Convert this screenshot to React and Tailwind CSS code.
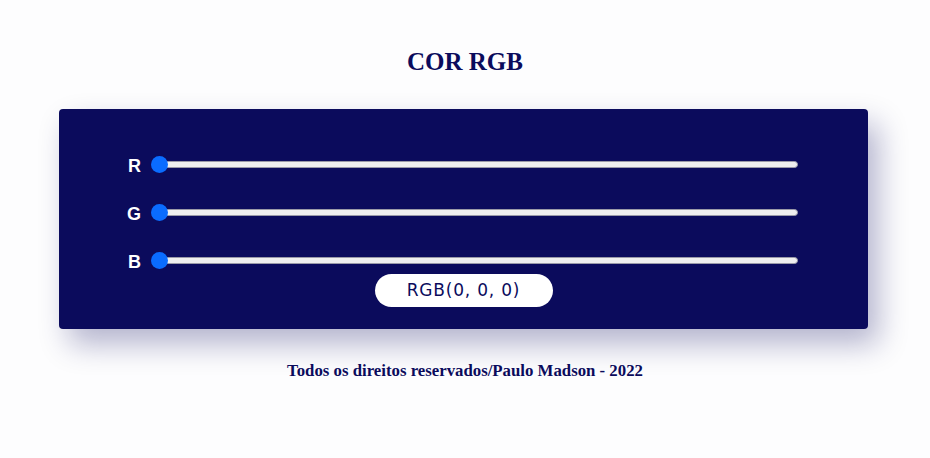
import React from 'react';

const Slider = ({ label }) => {
  return (
    <div className="flex items-center h-[24px]">
      <span className="w-[20px] text-right text-white font-bold text-[18px] leading-none font-['Liberation_Sans',Arial,sans-serif] pt-[4px]">
        {label}
      </span>
      <div className="relative ml-[10px] w-[647px] h-[17px] flex items-center">
        <div className="ml-[4px] flex-1 h-[7px] rounded-full bg-[#efefef] border border-[#9a9aa8]" />
        <div className="absolute left-0 top-0 w-[17px] h-[17px] rounded-full bg-[#0a6cff]" />
      </div>
    </div>
  );
};

export default function App() {
  return (
    <div className="min-h-screen bg-[#fdfdfe] pt-[47px] font-['Liberation_Serif','Times_New_Roman',serif]">
      <h1 className="text-center text-[25px] leading-[30px] font-bold text-[#0b0b5c]">COR RGB</h1>

      <div className="mt-[32px] ml-[59px] w-[809px] rounded-[4px] bg-[#0b0b5c] shadow-[10px_15px_30px_rgba(11,11,92,0.3)] pt-[43px] pb-[22px]">
        <div className="pl-[62px] flex flex-col gap-[24px]">
          <Slider label="R" />
          <Slider label="G" />
          <Slider label="B" />
        </div>
        <div className="mt-[2px] mx-auto w-[178px] h-[33px] rounded-full bg-white flex items-center justify-center text-[#0b0b5c] text-[17px] tracking-[0.8px] font-['DejaVu_Sans',Verdana,sans-serif]">
          RGB(0, 0, 0)
        </div>
      </div>

      <p className="mt-[32px] text-center text-[16.8px] leading-[20px] font-bold text-[#0b0b5c]">
        Todos os direitos reservados/Paulo Madson - 2022
      </p>
    </div>
  );
}
